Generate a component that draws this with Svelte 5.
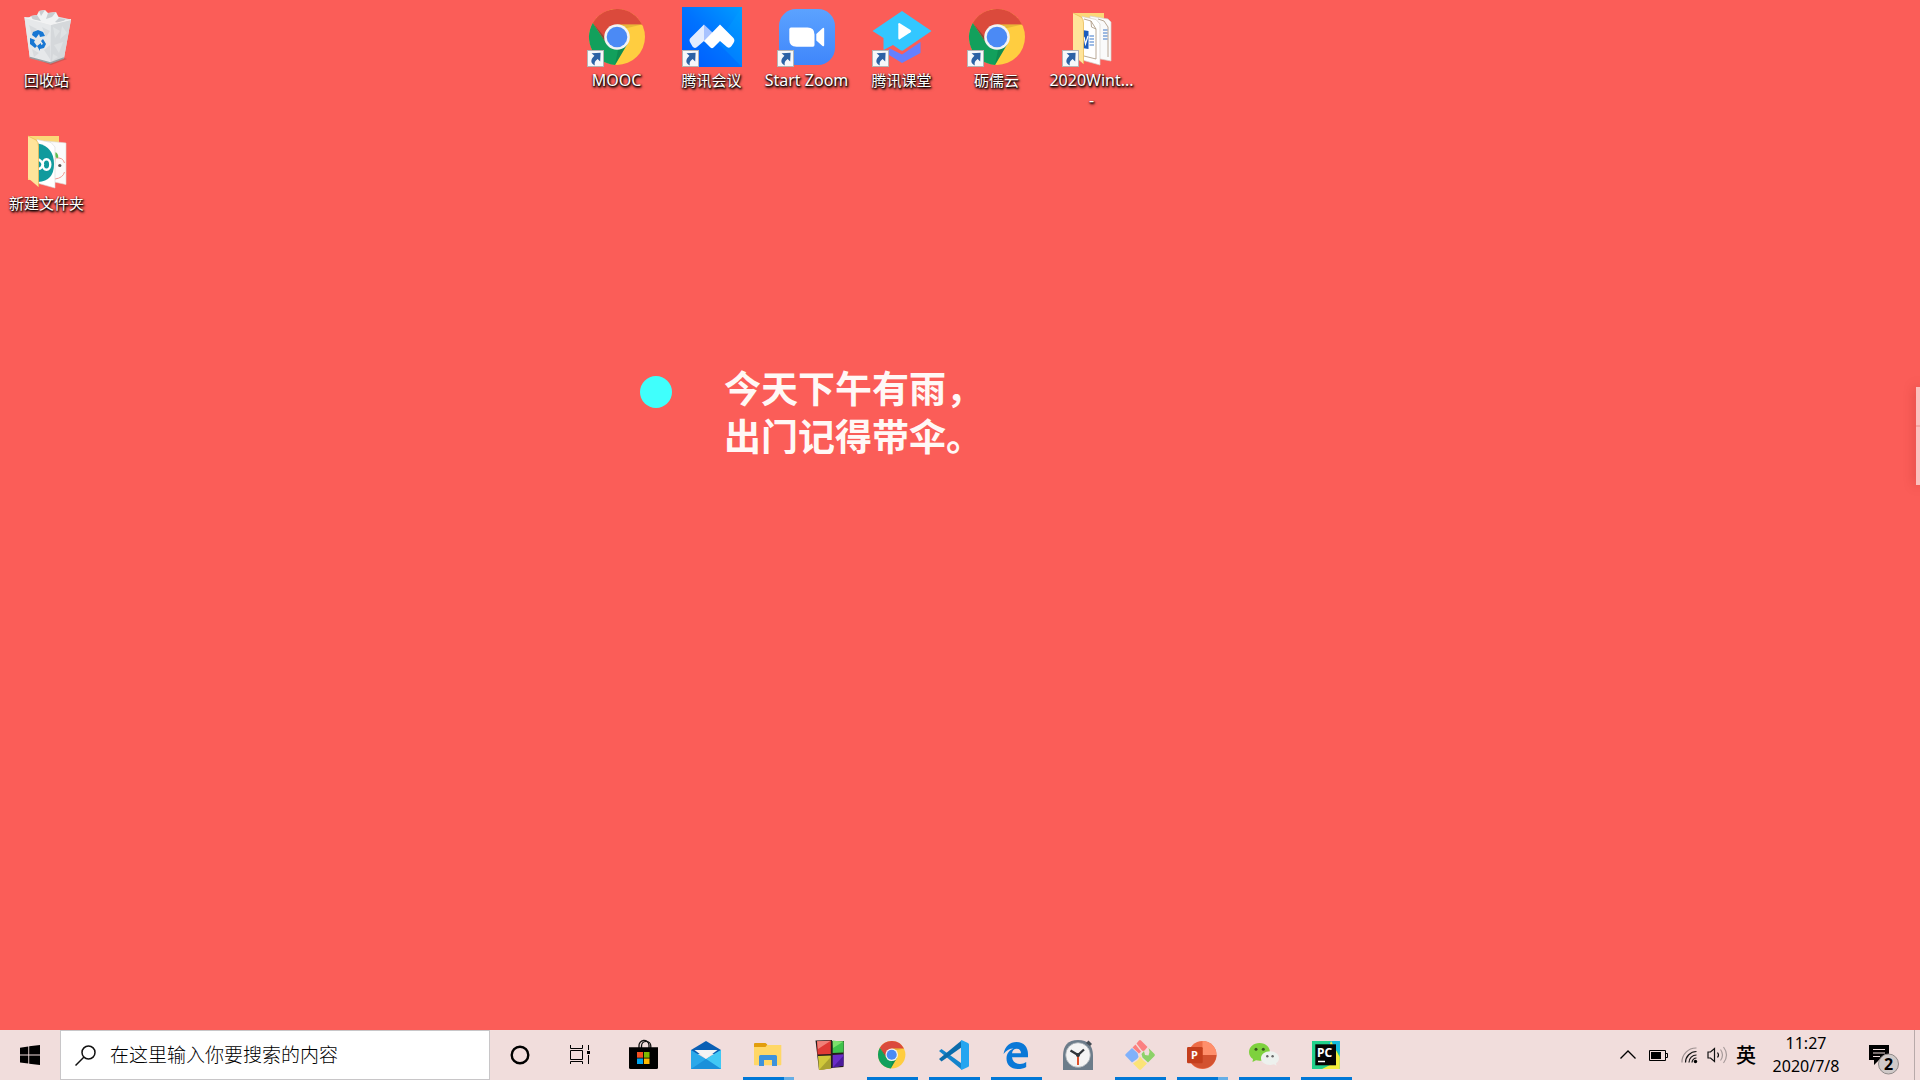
<script>
  const shortcuts = [
    { name: 'MOOC', icon: 'chrome', col: 7, latin: true },
    { name: '腾讯会议', icon: 'meeting', col: 8 },
    { name: 'Start Zoom', icon: 'zoom', col: 9, latin: true },
    { name: '腾讯课堂', icon: 'classroom', col: 10 },
    { name: '砺儒云', icon: 'chrome', col: 11 },
    { name: '2020Wint...\n-', icon: 'docs', col: 12, latin: true }
  ];

  const apps = [
    { id: 'store', name: 'Microsoft Store' },
    { id: 'mail', name: '邮件' },
    { id: 'explorer', name: '文件资源管理器', open: true, stacked: true },
    { id: 'blocks', name: '方块' },
    { id: 'chrome', name: 'Google Chrome', open: true },
    { id: 'code', name: 'Visual Studio Code', open: true },
    { id: 'edge', name: 'Microsoft Edge', open: true },
    { id: 'clock', name: '时钟' },
    { id: 'git', name: 'Git', open: true },
    { id: 'ppt', name: 'PowerPoint', open: true, stacked: true },
    { id: 'wechat', name: '微信', open: true },
    { id: 'pycharm', name: 'PyCharm', open: true }
  ];

  let query = $state('');
</script>

{#snippet chrome()}
  <circle cx="30" cy="30" r="28" fill="#ffcd40" />
  <path d="M55.1 17.5A28 28 0 0 0 5.8 15.9L19.2 36.2 30 30V17.5Z" fill="#db4a3c" />
  <path d="M5.8 15.9A28 28 0 0 0 28 58L40.8 36.2 30 30 19.2 36.2Z" fill="#12a05c" />
  <path d="M30 17.5H55.1L38 21.5Z" fill="#b98a28" opacity=".35" />
  <path d="M5.8 15.9 17.5 30 19 36.2Z" fill="#1c4430" opacity=".4" />
  <path d="M28 58 40.8 36.2 31 43Z" fill="#0a6a3c" opacity=".35" />
  <circle cx="30" cy="30" r="12.8" fill="#f3f3f3" />
  <circle cx="30" cy="30" r="10.3" fill="#4b8af5" />
{/snippet}

{#snippet folderBack()}
  <path d="M11 6H42V50H11Z" fill="#fbd878" />
{/snippet}

{#snippet folderFlap()}
  <path d="M11 6 19 10Q21.500 12 21.500 16V57L11 48Z" fill="#ffe49a" />
  <path d="M11 6 19 10Q21.500 12 21.500 16V57" fill="none" stroke="#e8bd58" stroke-width=".8" />
{/snippet}

{#snippet shortcutBadge()}
  <rect x=".5" y="43.500" width="16" height="16" fill="#f6f8fa" stroke="#b4b4b4" />
  <g transform="translate(0 43)">
    <path d="M4.600 3.200 13.600 2.800 13.200 11.400 10.600 9C8 11 7.200 12.500 7.800 15.400 3.400 13.500 3.200 9.500 7.400 5.800Z" fill="#2c62a5" />
  </g>
{/snippet}

{#snippet desktopIcon(id)}
  {#if id === 'chrome'}
    {@render chrome()}
  {:else if id === 'meeting'}
    <defs>
      <linearGradient id="meetingBg" x1="0" y1="1" x2="1" y2="0">
        <stop offset="0" stop-color="#0058ff" /><stop offset=".5" stop-color="#0073ff" /><stop offset="1" stop-color="#009dff" />
      </linearGradient>
    </defs>
    <rect width="60" height="60" fill="url(#meetingBg)" />
    <path d="M60 0V60L36 36Z" fill="#00a2ff" opacity=".3" />
    <path d="M22 17.500 8.500 31Q6.500 33 8.500 36L10.500 39.500Q12.500 42 15 40L22 34Z" fill="#e3ecff" />
    <path d="M22 17.500 31 26 22 35Z" fill="#a8c3ff" />
    <path d="M38 17.500 51 30.500Q53.500 33 51.500 36L49.500 39Q47.500 42 45 40L38 34 31.500 40.500Q30 42 28.500 40.500L22 34Z" fill="#fff" />
  {:else if id === 'zoom'}
    <defs>
      <linearGradient id="zoomBg" x1="0" y1="0" x2="0" y2="1">
        <stop offset="0" stop-color="#5ba2ff" /><stop offset="1" stop-color="#3f86fb" />
      </linearGradient>
    </defs>
    <rect x="2" y="2" width="56" height="56" rx="17" fill="url(#zoomBg)" />
    <path d="M14 20.500H30.500Q37.500 20.500 37.500 27.500V38Q37.500 39.700 36 39.700H19.500Q12.300 39.700 12.300 32.500V22.500Q12.300 20.500 14 20.500Z" fill="#fff" />
    <path d="M39.300 27 45.500 21.300Q47.200 20 47.200 22V38Q47.200 40 45.500 39L39.300 33.500Z" fill="#fff" />
  {:else if id === 'classroom'}
    <path d="M30 47.500 48.500 35V46L30 56 17 48V42L18 41.500Z" fill="#6580ff" />
    <path d="M30 4 59.500 24 31 43.500Q30 44 28.500 43.300L21 38 11.500 43V31L.5 24Z" fill="#33c7ff" />
    <path d="M27.800 16.300 38.500 23Q40 24.300 38.500 25.300L27.800 32.300Q26.300 33 26.300 31V17.300Q26.300 15.500 27.800 16.300Z" fill="#fff" />
  {:else if id === 'docs'}
    {@render folderBack()}
    <path d="M28 9 46 12 49 15V54L28 50Z" fill="#fafafa" stroke="#d4d0ca" stroke-width=".7" />
    <path d="M36 12 42 14 46 20V50" fill="none" stroke="#a7937c" stroke-width=".8" />
    <path d="M41 23H45.500M41 26H45.500M41 29H45.500M41 32H45.500" stroke="#3f78c9" />
    <path d="M20 9.500 34 12.500 38 17V58L20 53Z" fill="#fff" stroke="#d4d0ca" stroke-width=".7" />
    <path d="M22 12 29 14 34 22V52L22 49" fill="none" stroke="#a7937c" stroke-width=".8" />
    <path d="M29 14 29.500 20 34 22" fill="none" stroke="#a7937c" stroke-width=".8" />
    <path d="M20 23 26.500 24V42L20 41Z" fill="#1b5cbe" />
    <path d="M22 30 23.500 37 26 29" fill="none" stroke="#fff" stroke-width="1.200" />
    <path d="M27.500 29H32M27.500 32H32M27.500 35H32M27.500 38H32" stroke="#3f78c9" stroke-width="1.200" />
    {@render folderFlap()}
  {:else if id === 'arduino'}
    {@render folderBack()}
    <path d="M28 11 45 12.500 49 13V54.500L28 50Z" fill="#fbfbfb" stroke="#dcd8d2" stroke-width=".6" />
    <path d="M38.500 28Q46 27 47.500 33M47.500 42Q46 48 38 49M38 28 37.500 35" fill="none" stroke="#f09a92" stroke-width="1" />
    <path d="M38.500 27.500Q37.500 24 38.500 22 42 24.500 41 28Z" fill="#5fbf4e" />
    <circle cx="42.800" cy="35.500" r="1.600" fill="#555" />
    <path d="M20 9.500 34 12.500 38 17V58L20 53Z" fill="#fff" stroke="#d8d8d8" stroke-width=".6" />
    <path d="M21 13.500Q37 17 37 34T21 52Z" fill="#109a9d" />
    <ellipse cx="29.500" cy="34.500" rx="3.800" ry="5.200" fill="none" stroke="#fff" stroke-width="2.400" />
    <path d="M21 29.500Q24 30 26 34.500 24 39.500 21 38.500" fill="none" stroke="#fff" stroke-width="2.400" />
    {@render folderFlap()}
  {:else if id === 'bin'}
    <path d="M13 50 33.500 56 47 51 50 52 34 58Z" fill="#8c4a48" opacity=".35" />
    <path d="M7.500 10.500 22 9 38 9 54 12.500 47 51 33.500 56 12.800 50.500Z" fill="#dfe2e5" />
    <path d="M10 13 14 9 20 8 22 4 28 3 31 6 39 5 42 11 49 12 50 16 34 19 12 16Z" fill="#f1f2f3" />
    <path d="M22 4 28 3 24 9ZM31 6 39 5 35 10 29 12ZM14 9 20 8 24 14 16 13ZM42 11 49 12 44 17 38 15Z" fill="#c9cdd1" />
    <path d="M7.500 10.500 34 17.500 33.500 56 12.800 50.500Z" fill="#e6e8ea" />
    <path d="M34 17.500 54 12.500 47 51 33.500 56Z" fill="#d5d8db" />
    <path d="M12 18 20 22 15 28ZM25 20 33 24 29 30ZM15 42 22 46 17 50ZM27 43 33 38V52Z" fill="#d8dbde" />
    <path d="M36 20 43 24 38 31ZM45 19 50 26 43 32ZM37 38 46 35 42 46ZM36 47 41 50 35 54Z" fill="#dfe2e4" />
    <path d="M7.500 10.500 34 17.500 54 12.500" fill="none" stroke="#f4f4f4" stroke-width="1" />
    <path d="M12.800 50.500 33.500 56 47 51" fill="none" stroke="#989da1" stroke-width="1.500" />
    <path d="M16 25 21 23 26 25 28 29 23 30 22 27 19 31 15 28Z" fill="#1877d3" />
    <path d="M13 31 18 33 17 35 20 39 18 41 13 37Z" fill="#1877d3" />
    <path d="M26 32 29 37 27 41 23 42V44L20 39 24 36V38L26 37 24 34Z" fill="#1877d3" />
  {/if}
{/snippet}

{#snippet appIcon(id)}
  {#if id === 'store'}
    <path d="M10 8V6A5 5 0 0 1 20 5V8" fill="none" stroke="#111" stroke-width="1.300" />
    <path d="M12.500 8V6A4.500 4.500 0 0 1 21.800 6V8" fill="none" stroke="#111" stroke-width="1.300" />
    <path d="M0 7.300H29V27.500Q29 29 27.500 29H1.500Q0 29 0 27.500Z" fill="#000" />
    <path d="M8 12H14V17.700H8Z" fill="#f25022" /><path d="M14.900 12H20.500V17.700H14.900Z" fill="#7fba00" />
    <path d="M8 18.500H14V24H8Z" fill="#00a4ef" /><path d="M14.900 18.500H20.500V24H14.900Z" fill="#ffb900" />
  {:else if id === 'mail'}
    <path d="M0 10 15 1 30 10V14H0Z" fill="#0a5fb4" />
    <path d="M0 10 15 19 30 10V29H0Z" fill="#2aa8ea" />
    <path d="M30 10V29L15 19Z" fill="#41c8f5" />
    <path d="M0 29 15 19 30 29Z" fill="#1a90da" />
    <path d="M3.500 10H26.500L15 18.800Z" fill="#f4f4f4" />
  {:else if id === 'explorer'}
    <path d="M1 5H28.300V24.500Q28.300 25.300 27.500 25.300H1.800Q1 25.300 1 24.500Z" fill="#ffd766" />
    <path d="M1 4Q1 3 2 3H12.500L14.300 4.500 12.500 7H1Z" fill="#e29d0c" />
    <path d="M6 26V16.500Q6 15 7.500 15H22.500Q24 15 24 16.500V26H19V20H11V26Z" fill="#3d92dc" />
  {:else if id === 'blocks'}
    <path d="M.5.500 17 0 18 14 17.500 28 4 30Z" fill="#241c1c" />
    <path d="M15 1 29 1 28.500 27 15 28Z" fill="#241c1c" />
    <path d="M2 1.300 15.800.800V14L2.500 14.600Z" fill="#e03a35" /><path d="M2 1.300 15.800.800 3 9Z" fill="#f08078" />
    <path d="M17.700.800 28.800 1.500 28.500 12.600 17.700 13Z" fill="#3fc24a" /><path d="M17.700.800 28.600 1.500 18 8Z" fill="#7ce06c" />
    <path d="M3 16 15.800 15.600V28.500L4 30Z" fill="#d0c83a" /><path d="M4 30 15.800 17V28.500Z" fill="#aaa230" />
    <path d="M17.700 15 28.500 14.300 28.300 25.500 17.700 27.500Z" fill="#6a2cc8" /><path d="M17.700 27.500 28.300 16V25.500Z" fill="#4c1c9c" />
  {:else if id === 'chrome'}
    <g transform="scale(.49)">{@render chrome()}</g>
  {:else if id === 'code'}
    <path d="M0 11 2.500 9 22 23 22.500 29.500Z" fill="#1484cc" />
    <path d="M0 19 2.500 21.500 23 7 22.500.5Z" fill="#0b6cab" />
    <path d="M22.500 0 29 3Q30 3.500 30 4.500V25.500Q30 26.500 29 27L22.500 30Q21 29 22 27V3Q21 1 22.500 0Z" fill="#25a5f0" />
  {:else if id === 'edge'}
    <path d="M2.500 14C4 6 9 2 15.500 2 23 2 27 7.500 27 14V17.300H11C11.500 22 15 24 19 24 21.500 24 23.500 23.200 25.200 22V27C23 28.500 20 29 17 29 9.500 29 5.500 24.500 5.500 18.500 5.500 13.500 8.500 10 12.500 8.500 8.500 8.500 5 10.500 2.500 14ZM11 13.200H20C20 10.500 18.500 8.700 15.700 8.700S11.300 10.500 11 13.200Z" fill="#0a78d7" />
  {:else if id === 'clock'}
    <path d="M0 16Q0 0 15 0T30 16V30H0Z" fill="#6c7c8a" />
    <path d="M23 3 25.500.500 29 4 27 6Z" fill="#444c54" />
    <circle cx="15" cy="15" r="12.300" fill="#f4f4f4" stroke="#a9b0b6" stroke-width=".8" />
    <path d="M7.500 10.500 15 15 21 9.500" fill="none" stroke="#30353a" stroke-width="2.300" />
    <path d="M15 15V25" stroke="#e0512a" stroke-width="2" /><circle cx="15" cy="15" r="2" fill="#30353a" />
  {:else if id === 'git'}
    <path d="M14 .5Q15-.5 16 .5L22.500 7 19.500 10.500Q18 11.500 16.500 10L11.500 3.500Z" fill="#fb8080" />
    <path d="M10.500 4.500 16 11.500 14 13.500 7.500 7.500Z" fill="#fb8080" />
    <path d="M7 8 12.500 13 13.500 17 12 19 7 22.500.500 15.800Q0 15 .5 14.300Z" fill="#80b1fb" />
    <path d="M23.500 8 29.500 14Q30.300 15 29.500 16L23 22.500 17.500 17.500 16.500 14 19 11 20 15 23.500 15.500 24.500 12Z" fill="#8cd268" />
    <path d="M15 16.500 18 20 22 23.500 16 29.500Q15 30.300 14 29.500L8 23.500 13 20Z" fill="#fbe377" />
  {:else if id === 'ppt'}
    <circle cx="15.500" cy="15" r="14" fill="#ed6c47" />
    <path d="M15.500 1A14 14 0 0 1 29.500 15H15.500Z" fill="#ff8f6b" />
    <path d="M2 18A14 14 0 0 0 29.500 15H15.500Z" fill="#d35230" />
    <rect x="0" y="7" width="15.700" height="16.300" rx="1.300" fill="#c43e1c" />
    <text x="4" y="19" class="glyph" font-size="11" fill="#fff">P</text>
  {:else if id === 'wechat'}
    <path d="M10.500 3C4.500 3 0 7 0 12 0 15 1.500 17.500 4 19L3.500 22 7 20.300Q10 21 13 20.500L21 14C21.500 7 17 3 10.500 3Z" fill="#7ed13e" />
    <circle cx="7" cy="9.300" r="1.500" fill="#38551f" /><circle cx="14.300" cy="9.300" r="1.500" fill="#38551f" />
    <path d="M21 11.300C16 11.300 12 14.500 12 18.300S16 25 21 25Q23 25 25 24.300L27.500 25.800 27 23.300C29 22 30 20.300 30 18.300 30 14.500 26 11.300 21 11.300Z" fill="#edf1ee" />
    <circle cx="18.300" cy="16.300" r="1.200" fill="#666" /><circle cx="23.600" cy="16.300" r="1.200" fill="#666" />
  {:else if id === 'pycharm'}
    <path d="M1 1H28.700V29H1Z" fill="#21d08b" />
    <path d="M17 4 20 1H28.700V13Z" fill="#12bdd8" />
    <path d="M20 1 28.700 17V29H11L25 22 19 4Z" fill="#f4ee3c" />
    <path d="M24 1H28.700V16Z" fill="#18b8dc" />
    <path d="M4.300 4.300H25V25.300H4.300Z" fill="#050505" />
    <text x="6" y="16.500" class="glyph" font-size="12" fill="#fff">PC</text>
    <path d="M7 21.500H14" stroke="#fff" stroke-width="1.500" />
  {/if}
{/snippet}

<div class="screen">
  <main class="desktop">
    <button class="item row1">
      <svg viewBox="0 0 60 60" aria-hidden="true">{@render desktopIcon('bin')}</svg>
      <span>回收站</span>
    </button>
    <button class="item row2">
      <svg viewBox="0 0 60 60" aria-hidden="true">{@render desktopIcon('arduino')}</svg>
      <span>新建文件夹</span>
    </button>
    {#each shortcuts as s}
      <button class="item row1" class:latin={s.latin} style="grid-column: {s.col}">
        <svg viewBox="0 0 60 60" aria-hidden="true">
          {@render desktopIcon(s.icon)}
          {@render shortcutBadge()}
        </svg>
        <span>{s.name}</span>
      </button>
    {/each}

    <section class="reminder">
      <i class="dot"></i>
      <div class="message">
        <p>今天下午有雨，</p>
        <p>出门记得带伞。</p>
      </div>
    </section>
    <aside class="handle" aria-label="侧边栏"></aside>
  </main>

  <footer class="taskbar">
    <button class="sys" aria-label="开始">
      <svg width="20" height="20" viewBox="0 0 20 20">
        <path d="M0 2.800 8.300 1.500V9.500H0ZM9.200 1.300 20 0V9.500H9.200ZM0 10.400H8.300V18.500L0 17.400ZM9.200 10.400H20V20L9.200 18.700Z" />
      </svg>
    </button>
    <label class="search">
      <svg width="21" height="21" viewBox="0 0 21 21" fill="none" stroke="#111" stroke-width="1.500">
        <circle cx="13.500" cy="7.500" r="6.500" /><path d="M9 12 .5 20.500" />
      </svg>
      <input type="text" aria-label="搜索" placeholder="在这里输入你要搜索的内容" bind:value={query} />
    </label>
    <button class="sys" aria-label="Cortana">
      <svg width="20" height="20" viewBox="0 0 20 20"><circle cx="10" cy="10" r="8.300" fill="none" stroke="#000" stroke-width="2.400" /></svg>
    </button>
    <button class="sys" aria-label="任务视图">
      <svg width="20" height="20" viewBox="0 0 20 20" fill="none" stroke="#000">
        <path d="M.5 0V3.500H12.500V0M.5 5.500H12.500V14.500H.5ZM.5 19V16.500H12.500V19M18.500 0V5M18.500 10V19" />
        <path d="M17 6H20V9H17Z" fill="#000" stroke="none" />
      </svg>
    </button>

    <nav class="apps" aria-label="应用">
      {#each apps as app}
        <button class="app" class:open={app.open} class:stacked={app.stacked} aria-label={app.name}>
          <svg width="30" height="30" viewBox="0 0 30 30">{@render appIcon(app.id)}</svg>
        </button>
      {/each}
    </nav>

    <div class="tray">
      <button aria-label="显示隐藏的图标">
        <svg width="16" height="20" viewBox="0 0 16 20"><path d="M.5 13.500 8 6 15.500 13.500" fill="none" stroke="#000" stroke-width="1.300" /></svg>
      </button>
      <button class="battery" aria-label="电池">
        <svg width="20" height="20" viewBox="0 0 20 20">
          <path d="M.5 5.500H16.500V15.500H.5ZM17 8.500H18.500V12.500H17" fill="none" stroke="#000" /><path d="M2 7H12V14H2Z" />
        </svg>
      </button>
      <button class="wifi" aria-label="网络">
        <svg width="18" height="20" viewBox="0 0 18 20" fill="none" stroke-width="1.200">
          <path d="M1 17.500A14 14 0 0 1 15.500 3" stroke="#9c9090" />
          <path d="M4.500 17.500A11 11 0 0 1 15.500 6.500M8 17.500A7.500 7.500 0 0 1 15.500 10M11 17.500A4.500 4.500 0 0 1 15.500 13" stroke="#111" />
          <circle cx="14.500" cy="16.500" r="1.700" fill="#000" />
        </svg>
      </button>
      <button class="volume" aria-label="音量">
        <svg width="22" height="20" viewBox="0 0 22 20" fill="none" stroke="#111" stroke-width="1.200">
          <path d="M1 7V13H3.500L7.500 16.500V3.500L3.500 7ZM10.500 7.500Q12.500 10 10.500 12.500" />
          <path d="M13.500 4.500Q17.500 10 13.500 15.500M16.500 2Q22.500 10 16.500 18" stroke="#a69a9a" />
        </svg>
      </button>
      <button class="ime">英</button>
      <button class="clock"><time>11:27</time><span>2020/7/8</span></button>
      <button class="notify" aria-label="通知">
        <svg width="32" height="32" viewBox="0 0 32 32">
          <path d="M1 2H21V17H11L6 22V17H1Z" />
          <path d="M5 6.500H17M5 10H17M5 13.500H12" stroke="#f0dddc" stroke-width="1.200" />
          <circle cx="20.500" cy="21" r="10" fill="#cfc9c8" stroke="#8f8988" />
          <text x="20.500" y="26.500" class="glyph" font-size="16" text-anchor="middle">2</text>
        </svg>
      </button>
      <button class="peek" aria-label="显示桌面"></button>
    </div>
  </footer>
</div>

<style>
  :global(body) {
    margin: 0;
    background: #fb5d58;
  }
  .screen {
    display: flex;
    flex-direction: column;
    height: 100vh;
    min-height: 400px;
    font-family: 'Noto Sans', 'Noto Sans CJK SC', sans-serif;
    color: #000;
    overflow: hidden;
  }
  button {
    border: 0;
    padding: 0;
    margin: 0;
    background: none;
    font: inherit;
    color: inherit;
  }
  .desktop {
    position: relative;
    flex: 1;
    display: grid;
    grid-template-columns: repeat(auto-fill, 93px);
    grid-auto-rows: 121px;
    gap: 2px;
    align-content: start;
    background: #fb5d58;
  }
  .item {
    display: flex;
    flex-direction: column;
    align-items: center;
    padding-top: 7px;
    gap: 3px;
    color: #fff;
    font-size: 15px;
    line-height: 20px;
    white-space: pre-line;
    text-shadow: 1px 1px 2px #000, 0 1px 2px #000, 1px 2px 3px rgba(0, 0, 0, 0.6);
  }
  .item.latin {
    font-size: 16px;
  }
  .item svg {
    width: 60px;
    height: 60px;
    flex: none;
  }
  .row1 {
    grid-row: 1;
  }
  .row2 {
    grid-row: 2;
    grid-column: 1;
  }
  .reminder {
    position: absolute;
    left: 640px;
    top: 363px;
    display: flex;
    align-items: flex-start;
    gap: 52px;
  }
  .dot {
    width: 32px;
    height: 32px;
    margin-top: 13px;
    border-radius: 50%;
    background: #40fffc;
  }
  .message p {
    margin: 0;
    color: #fff8f6;
    font: 700 37px/48px 'Noto Sans CJK SC', sans-serif;
    white-space: nowrap;
  }
  .handle {
    position: absolute;
    right: 0;
    top: 387px;
    width: 4px;
    height: 98px;
    background: linear-gradient(#fcbfbd 38px, #f4a5a2 38px, #f4a5a2 40px, #fcbfbd 40px);
    box-shadow: 0 0 12px rgba(120, 20, 20, 0.4);
  }
  .taskbar {
    flex: none;
    display: flex;
    height: 50px;
    background: #f1dddc;
  }
  .sys {
    width: 60px;
    flex: none;
    display: grid;
    place-items: center;
  }
  .search {
    box-sizing: border-box;
    flex: 0 1 430px;
    min-width: 0;
    display: flex;
    align-items: center;
    gap: 14px;
    padding-left: 14px;
    border: 1px solid #c8c6c8;
    background: #fff;
  }
  .search svg {
    flex: none;
  }
  .search input {
    flex: 1;
    min-width: 0;
    border: 0;
    padding: 0 0 2px;
    outline: 0;
    background: none;
    font: 19px/28px 'Noto Sans CJK SC', sans-serif;
    color: #111;
  }
  .search input::placeholder {
    color: #000;
    font-weight: 300;
    opacity: 1;
  }
  .apps {
    display: flex;
    gap: 2px;
    padding-left: 4px;
  }
  .app {
    position: relative;
    width: 60px;
    display: grid;
    place-items: center;
  }
  .app svg,
  .notify svg {
    overflow: visible;
  }
  .app.open::after {
    content: '';
    position: absolute;
    left: 5px;
    bottom: 0;
    width: 51px;
    height: 3px;
    background: #0078d7;
  }
  .app.stacked::after {
    background: linear-gradient(90deg, #0078d7 41px, #66aee6 41px);
  }
  .glyph {
    font-family: 'Noto Sans', sans-serif;
    font-weight: 700;
  }
  .tray {
    display: flex;
    align-items: center;
    margin-left: auto;
  }
  .tray svg {
    display: block;
  }
  .battery {
    margin-left: 13px;
  }
  .wifi {
    margin-left: 12px;
  }
  .volume {
    margin-left: 8px;
  }
  .ime {
    margin-left: 7px;
    font: 500 20px/28px 'Noto Sans CJK SC', sans-serif;
  }
  .clock {
    display: flex;
    flex-direction: column;
    align-items: center;
    width: 100px;
    font-size: 16px;
    line-height: 23px;
  }
  .notify {
    margin-left: 12px;
    margin-top: 8px;
  }
  .peek {
    align-self: stretch;
    width: 6px;
    margin-left: 14px;
    border-left: 1px solid #b8aaaa;
  }
</style>
